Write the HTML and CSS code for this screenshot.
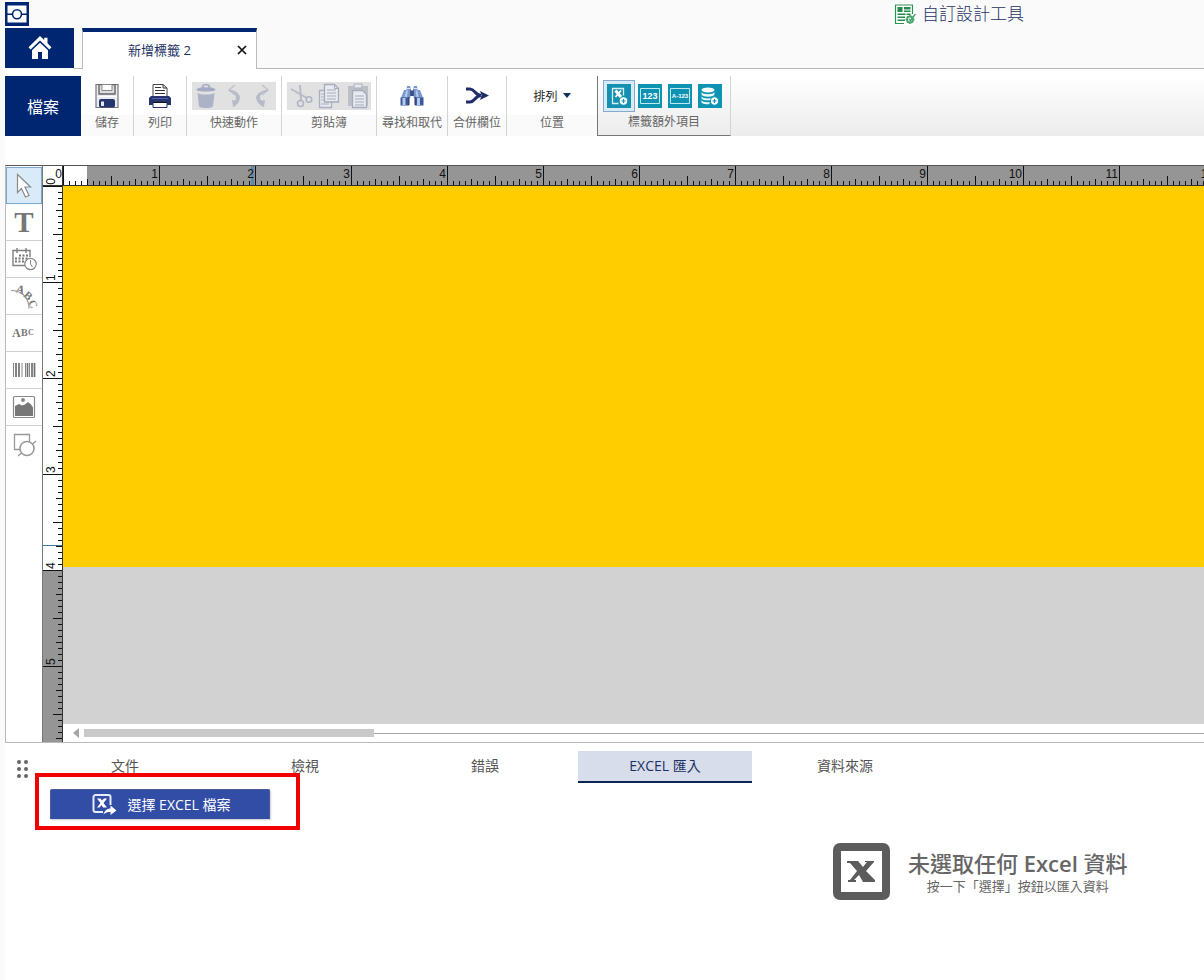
FILE: index.html
```html
<!DOCTYPE html>
<html lang="zh-Hant">
<head>
<meta charset="utf-8">
<title>新增標籤 2</title>
<link rel="stylesheet" href="styles.css">
</head>
<body>
<div class="app">
  <header class="header">
    <div class="titlebar">
      <svg class="logo" viewBox="0 0 24 24" width="24" height="24" aria-hidden="true">
        <rect width="24" height="24" fill="#002672"/>
        <path d="M2.500 3.500h19v17h-19z" fill="#fff"/>
        <path d="M2 12.300h5.500M16.500 12.300H22" stroke="#002672" stroke-width="1.500"/>
        <path d="M6 9.500c1.500-1 1.500-2.500 4-3.500h4c2.500 1 2.500 2.500 4 3.500M6 15c1.500 1 2 2.500 4 3.500h4c2-1 2.500-2.500 4-3.500" fill="none" stroke="#fff" stroke-width="1.500"/>
        <circle cx="12" cy="12.300" r="4.500" fill="#fff" stroke="#002672" stroke-width="1.600"/>
      </svg>
      <a class="custom-tool" href="#">
        <svg viewBox="0 0 22 22" width="22" height="22" aria-hidden="true">
          <rect width="22" height="22" fill="#fff"/>
          <path d="M10 20.500H1.500V2h17v9" fill="none" stroke="#2f8f55" stroke-width="1.200"/>
          <path d="M3.500 4h5v5h-5zM10 4h6.500v2.500H10zM10 7.500h6.500V9H10zM3.500 10.500h8V12h-8zM12.500 10.500h4V12h-4zM3.500 13.500h7.500V15H3.500zM3.500 16.500h7.500V18H3.500z" fill="#238b4b"/>
          <circle cx="16" cy="16.500" r="3" fill="none" stroke="#4aa56c" stroke-width="1.800"/>
          <path d="M16 12v2M16 19v2M11.500 16.500h2M18.500 16.500h2M13 13.500l1 1M18 18.500l1 1M13 19.500l1-1M15 16l1.500 1.500L21.500 11" fill="none" stroke="#4aa56c" stroke-width="1.500"/>
        </svg>
        <span>自訂設計工具</span>
      </a>
    </div>
    <nav class="doc-tabs">
      <button class="home" type="button" aria-label="首頁">
        <svg viewBox="0 0 24 24" width="24" height="24" aria-hidden="true">
          <path d="M12 0 0.500 11.200 2.600 13.400 12 4.600l9.400 8.800 2.100-2.200-4-3.900V1.800h-3.300v2.300z" fill="#fff"/>
          <path d="M12 6.800 4 14.200V23h6v-7h4v7h6v-8.800z" fill="#fff"/>
        </svg>
      </button>
      <span class="tab-gap"></span>
      <div class="doc-tab">
        <span>新增標籤 2</span>
        <button class="close" type="button" aria-label="關閉">
          <svg viewBox="0 0 10 10" width="10" height="10" aria-hidden="true"><path d="M1 1l8 8M9 1 1 9" stroke="#111" stroke-width="1.700"/></svg>
        </button>
      </div>
      <span class="tab-rest"></span>
    </nav>
  </header>

  <main class="body">
    <section class="ribbon" aria-label="功能區">
      <button class="file" type="button">檔案</button>

      <button class="group g-small" type="button">
        <span class="tools">
          <svg viewBox="0 0 24 24" width="24" height="24" aria-hidden="true">
            <path d="M1 .5h22v23H1z" fill="#e9edf3" stroke="#777" stroke-width="1.200"/>
            <path d="M4 .5V10h16V.5z" fill="#ddd" stroke="#666" stroke-width="1.400"/>
            <path d="M7 .5v6h10v-6z" fill="#fff" stroke="#888"/>
            <path d="M2 12.500h20" stroke="#fff"/>
            <rect x="4" y="15" width="16" height="8.500" rx="2" fill="#26356f"/>
            <path d="M6 17.500h3V22H6z" fill="#e5eaf6"/>
          </svg>
        </span>
        <span class="caption">儲存</span>
      </button>

      <button class="group g-small" type="button">
        <span class="tools">
          <svg viewBox="0 0 24 24" width="24" height="24" aria-hidden="true">
            <path d="M5 13V.500h10l4 3.500v9z" fill="#fff" stroke="#444"/>
            <path d="M15 .5V4h4M7 3.500h6M7 6.500h10M7 9.500h10" fill="none" stroke="#333"/>
            <path d="M3 12h18l2 2v7H1v-7z" fill="#26356f"/>
            <path d="M4 14.500h16" stroke="#53629c"/>
            <path d="M5 18h14v5.500H5z" fill="#fff" stroke="#26356f"/>
            <path d="M5 18h14v1H5z" fill="#111"/>
          </svg>
        </span>
        <span class="caption">列印</span>
      </button>

      <div class="group g-wide">
        <span class="tools disabled">
          <button type="button" disabled aria-label="刪除"><svg viewBox="0 0 28 28" width="28" height="28" aria-hidden="true">
            <path d="M4.500 8c0-4 19-4 19 0-2 2-17 2-19 0z" fill="#a3abc2"/><ellipse cx="14" cy="4.500" rx="3.500" ry="1.800" fill="#e1e1e1" stroke="#a3abc2" stroke-width="1.500"/>
            <path d="M5.500 11c4 2 13 2 17 0l-1.500 13.500c-3 2-11 2-14 0z" fill="#adb3c7"/></svg></button>
          <button type="button" disabled aria-label="復原"><svg viewBox="0 0 28 28" width="28" height="28" aria-hidden="true">
            <path d="M15 3 9 8l6 5" fill="none" stroke="#bfc3ce" stroke-width="1.600"/><path d="M9 8h3c6 2 8 5 8 8-1 5-4 8-7 9l-1-7c3 1 4 0 4-2 0-4-3-6-7-7z" fill="#b6bbc9"/></svg></button>
          <button type="button" disabled aria-label="取消復原"><svg viewBox="0 0 28 28" width="28" height="28" aria-hidden="true">
            <path d="m14 3 6 5-6 5" fill="none" stroke="#bfc3ce" stroke-width="1.600"/><path d="M20 8h-3c-6 2-9 5-9 8 1 5 5 8 8 9l1-7c-3 1-5 0-5-2 0-4 4-6 8-7z" fill="#b6bbc9"/></svg></button>
        </span>
        <span class="caption">快速動作</span>
      </div>

      <div class="group g-wide">
        <span class="tools disabled">
          <button type="button" disabled aria-label="剪下"><svg viewBox="0 0 28 28" width="28" height="28" aria-hidden="true">
            <path d="M4 7l16 9M13 3l1 15" stroke="#b7bbc7" stroke-width="2"/><circle cx="13.500" cy="21.500" r="3" fill="none" stroke="#b0b5c3" stroke-width="1.600"/><circle cx="22" cy="17.500" r="2.800" fill="none" stroke="#b0b5c3" stroke-width="1.600"/></svg></button>
          <button type="button" disabled aria-label="複製"><svg viewBox="0 0 28 28" width="28" height="28" aria-hidden="true">
            <path d="M4.500 8.500h12v17h-12z" fill="#e6e8ec" stroke="#aab0c0" stroke-width="1.300"/><path d="M6 12h8M6 15h8M6 18h8M6 22h8" stroke="#aab0c0"/>
            <path d="M9.500 2.500h10l4 4v13.500h-14z" fill="#e8eaee" stroke="#a4abbd" stroke-width="1.300"/><path d="M19.500 2.500v4h4M12 8h9M12 11h9M12 14h9M12 17h9" fill="none" stroke="#a4abbd"/></svg></button>
          <button type="button" disabled aria-label="貼上"><svg viewBox="0 0 28 28" width="28" height="28" aria-hidden="true">
            <path d="M5 4h20v20H5z" fill="#bcbfc6"/><path d="M11 2h8v4h-8z" fill="#e6e7ea" stroke="#aab0c0"/>
            <path d="M9.500 8.500h10l4 4v13h-14z" fill="#e8eaee" stroke="#a4abbd" stroke-width="1.300"/><path d="M12 14h9M12 17h9M12 20h9M12 23h9" stroke="#a4abbd"/></svg></button>
        </span>
        <span class="caption">剪貼簿</span>
      </div>

      <button class="group g-find" type="button">
        <span class="tools">
          <svg viewBox="0 0 24 24" width="24" height="24" aria-hidden="true">
            <path d="M7 2h3l1 3v6l-1 3H1l3-8h2.500z" fill="#7896cc"/><path d="M14 2h3l.5 4H20l3 8h-9l-1-3V5z" fill="#7896cc"/>
            <path d="M10.500 7h3v5h-3z" fill="#4d6aa6"/>
            <path d="M0.500 13.500H9v8H.5zM15 13.500h8.500v8H15z" fill="#3c5896"/>
            <path d="M2.500 14h3v7h-3zM17 14h3v7h-3zM6 6.500h2L7 13H4.500zM15.500 6.500h2l1 6.500h-2z" fill="#b4c8ee"/>
            <path d="M9 13v8M15 13v8M11 6v6M13 6v6" stroke="#26355f"/>
            <path d="M7 4.500h3.500M13.500 4.500H17" stroke="#dce6f8"/>
          </svg>
        </span>
        <span class="caption">尋找和取代</span>
      </button>

      <button class="group g-merge" type="button">
        <span class="tools">
          <svg viewBox="0 0 26 20" width="26" height="20" aria-hidden="true">
            <path d="M2 3h4c5 0 5 6.500 11 6.500M2 16h4c5 0 5-6.500 11-6.500" fill="none" stroke="#1f2d69" stroke-width="3"/>
            <path d="M16 5l9 4.500L16 14l1.500-4.500z" fill="#1f2d69"/>
          </svg>
        </span>
        <span class="caption">合併欄位</span>
      </button>

      <button class="group g-pos" type="button">
        <span class="tools arrange">排列
          <svg viewBox="0 0 8 5" width="8" height="5" aria-hidden="true"><path d="M0 0h8L4 5z" fill="#0e2a5e"/></svg>
        </span>
        <span class="caption">位置</span>
      </button>

      <div class="group g-extra">
        <span class="tools extras">
          <button class="active" type="button" aria-label="Excel"><svg viewBox="0 0 24 24" width="24" height="24" aria-hidden="true">
            <rect width="24" height="24" fill="#1690b0"/><path d="M11.500 19.500h-6v-15h11v7" fill="none" stroke="#d8f2f8" stroke-width="1.300"/>
            <path d="M8.500 6.500l5.500 6.500" stroke="#fff" stroke-width="3"/><path d="M14 6.500 8.500 13" stroke="#fff" stroke-width="1.800"/><circle cx="16.500" cy="17" r="3.800" fill="#fff"/><path d="M16.500 15v4M14.500 17h4" stroke="#1690b0" stroke-width="1.200"/></svg></button>
          <button type="button" aria-label="計數器"><svg viewBox="0 0 24 24" width="24" height="24" aria-hidden="true">
            <rect width="24" height="24" fill="#0f93b3"/><path d="M2.500 4.500h19v15h-19z" fill="none" stroke="#bfeaf3"/><text x="12" y="15" class="icon-num">123</text></svg></button>
          <button type="button" aria-label="序列"><svg viewBox="0 0 24 24" width="24" height="24" aria-hidden="true">
            <rect width="24" height="24" fill="#0f93b3"/><path d="M2.500 4.500h19v15h-19z" fill="none" stroke="#bfeaf3"/><text x="12" y="14" class="icon-seq">A-123</text></svg></button>
          <button type="button" aria-label="資料庫"><svg viewBox="0 0 24 24" width="24" height="24" aria-hidden="true">
            <rect width="24" height="24" fill="#0f93b3"/><ellipse cx="10" cy="6" rx="6.500" ry="2.500" fill="#fff"/>
            <path d="M3.500 8c1 3 12 3 13 0v2.500c-1 3-12 3-13 0zM3.500 12.200c1 3 12 3 13 0V14c-2 3-12 3-13 .5zM3.500 16c1 2 4 2.500 8 2V20c-4 .5-7 0-8-1.500z" fill="#e8f8fb"/>
            <circle cx="16.500" cy="17" r="4.200" fill="#fff" stroke="#0f93b3"/><path d="M16.500 15v4M14.500 17h4" stroke="#0f93b3" stroke-width="1.200"/></svg></button>
        </span>
        <span class="caption">標籤額外項目</span>
      </div>
      <div class="ribbon-rest"></div>
    </section>

    <section class="workspace">
      <div class="toolbox" role="toolbar" aria-label="工具">
        <button class="tool selected" type="button" aria-label="選取"><svg viewBox="0 0 28 28" width="28" height="28" aria-hidden="true">
          <path d="M7.500 2.500v18l4-4 4 8.500 3.500-1.500-4-8.500h5.500z" fill="#fff" stroke="#8a8a8a" stroke-width="1.200"/></svg></button>
        <button class="tool letter" type="button">T</button>
        <button class="tool" type="button" aria-label="日期時間"><svg viewBox="0 0 28 28" width="28" height="28" aria-hidden="true">
          <path d="M15 20.500H3V5.500h17V12M7 3v5M16 3v5" fill="none" stroke="#808080" stroke-width="1.400"/>
          <path d="M9 10.500h10M5 13.500h14M5 16.500h10" stroke="#777" stroke-width="1.800" stroke-dasharray="2 1.500"/>
          <circle cx="20.500" cy="19" r="5.700" fill="#fff" stroke="#888" stroke-width="1.200"/><path d="M20.500 15v4l2 3" fill="none" stroke="#888"/></svg></button>
        <button class="tool" type="button" aria-label="弧形文字"><svg viewBox="0 0 28 28" width="28" height="28" aria-hidden="true">
          <g class="icon-serif"><text font-size="12" transform="translate(5 10) rotate(18)">A</text><text font-size="11" transform="translate(13 14) rotate(42)">B</text><text font-size="11" transform="translate(18 20) rotate(65)">C</text></g>
          <path d="M1 8.500c10 0 18 6 18 18" fill="none" stroke="#999" stroke-width="1.200"/></svg></button>
        <button class="tool" type="button" aria-label="文字藝術師"><svg viewBox="0 0 28 28" width="28" height="28" aria-hidden="true">
          <g class="icon-serif"><text x="2" y="18" font-size="12">A</text><text x="11" y="17" font-size="10">B</text><text x="18" y="16" font-size="8">C</text></g></svg></button>
        <button class="tool" type="button" aria-label="條碼"><svg viewBox="0 0 28 28" width="28" height="28" aria-hidden="true">
          <path d="M3.500 7v14M15.500 7v14M19.500 7v14M12 7v14" stroke="#888"/><path d="M6 7v14M9 7v14M17.500 7v14M22 7v14M24.500 7v14" stroke="#707070" stroke-width="1.700"/></svg></button>
        <button class="tool" type="button" aria-label="圖片"><svg viewBox="0 0 28 28" width="28" height="28" aria-hidden="true">
          <rect x="3.500" y="3.500" width="21" height="21" rx="1" fill="#fff" stroke="#888" stroke-width="1.200"/><circle cx="13" cy="7" r="2" fill="#888"/>
          <path d="M5 23V13l4-2 3 1.500 3-1 3-2.500 3 2.500 2 3V23z" fill="#777"/></svg></button>
        <button class="tool" type="button" aria-label="圖形"><svg viewBox="0 0 28 28" width="28" height="28" aria-hidden="true">
          <path d="M4.500 3.500h15v15h-15z" fill="#fff" stroke="#999" stroke-width="1.300"/><path d="M8 25l18-15" stroke="#999" stroke-width="1.400"/><circle cx="17" cy="17.500" r="7" fill="#fff" stroke="#999" stroke-width="1.600"/></svg></button>
      </div>

      <div class="corner"><span class="v-zero">0</span><span class="h-zero">0</span></div>

      <div class="ruler-h">
        <svg class="ticks" width="100%" height="20" aria-hidden="true">
          <defs><pattern id="inch-h" width="96" height="20" patternUnits="userSpaceOnUse">
            <path d="M.5 0v20M48.500 10v10M24.500 13v7M72.500 13v7M6.500 15v5M12.500 15v5M18.500 15v5M30.500 15v5M36.500 15v5M42.500 15v5M54.500 15v5M60.500 15v5M66.500 15v5M78.500 15v5M84.500 15v5M90.500 15v5" stroke="#111"/>
          </pattern></defs>
          <rect width="24" height="20" fill="#fff"/>
          <rect x="188" width="3" height="20" fill="#5f87a8"/>
          <rect width="100%" height="20" fill="url(#inch-h)"/>
          <rect y="19" width="100%" height="1" fill="#333"/>
        </svg>
        <ol class="marks"><li>1</li><li>2</li><li>3</li><li>4</li><li>5</li><li>6</li><li>7</li><li>8</li><li>9</li><li>10</li><li>11</li><li>12</li></ol>
      </div>

      <div class="ruler-v">
        <svg class="ticks" width="20" height="100%" aria-hidden="true">
          <defs><pattern id="inch-v" width="20" height="96" patternUnits="userSpaceOnUse">
            <path d="M0 .5h20M10 48.500h10M13 24.500h7M13 72.500h7M15 6.500h5M15 12.500h5M15 18.500h5M15 30.500h5M15 36.500h5M15 42.500h5M15 54.500h5M15 60.500h5M15 66.500h5M15 78.500h5M15 84.500h5M15 90.500h5" stroke="#111"/>
          </pattern></defs>
          <rect width="20" height="384" fill="#fff"/>
          <rect width="20" height="100%" fill="url(#inch-v)"/>
          <rect y="359" width="20" height="1" fill="#3d7896"/>
          <rect x="19" width="1" height="100%" fill="#333"/>
        </svg>
        <ol class="marks"><li>1</li><li>2</li><li>3</li><li>4</li><li>5</li></ol>
      </div>

      <div class="stage">
        <div class="label-canvas"></div>
        <div class="scrollbar">
          <svg viewBox="0 0 6 10" width="6" height="10" aria-hidden="true"><path d="M6 0v10L0 5z" fill="#a6a6a6"/></svg>
          <span class="thumb"></span><span class="track"></span>
        </div>
      </div>
    </section>

    <section class="panel">
      <nav class="panel-tabs">
        <svg class="grip" viewBox="0 0 12 18" width="12" height="18" aria-hidden="true"><g fill="#666"><circle cx="2" cy="2" r="2"/><circle cx="9" cy="2" r="2"/><circle cx="2" cy="9" r="2"/><circle cx="9" cy="9" r="2"/><circle cx="2" cy="16" r="2"/><circle cx="9" cy="16" r="2"/></g></svg>
        <button type="button">文件</button>
        <button type="button">檢視</button>
        <button type="button">錯誤</button>
        <button class="current" type="button">EXCEL 匯入</button>
        <button type="button">資料來源</button>
      </nav>
      <div class="import">
        <button class="choose" type="button">
          <svg viewBox="0 0 26 24" width="26" height="24" aria-hidden="true">
            <path d="M12 20H4.500a2 2 0 0 1-2-2V5a2 2 0 0 1 2-2h13a2 2 0 0 1 2 2v8" fill="none" stroke="#e6ecff" stroke-width="2"/>
            <path d="M6 6.500h3.500l1.500 2 2-2h3L12.500 11l3.500 4.500h-4L10.500 13l-2 2.500H6L9.500 11z" fill="#fff"/>
            <path d="M12.500 22.500c1-4 4-6 7-6v-3l6 5-6 4.500v-3c-3 0-5 .5-7 2.500z" fill="#fff"/>
          </svg>
          選擇 EXCEL 檔案
        </button>
        <span class="highlight"></span>
      </div>
      <div class="empty">
        <svg viewBox="0 0 57 57" width="57" height="57" aria-hidden="true">
          <rect width="57" height="57" rx="7" fill="#5c5c5c"/><rect x="8" y="8" width="41" height="41" fill="#fff"/>
          <path d="M14 18h11l5 6 4-5h-2v-1h9v1l-8 9 9 9v2H30l-4-7-5 5h2v2h-8v-2h2l7-9-7-8h-3z" fill="#5c5c5c"/>
        </svg>
        <div class="empty-text"><h2>未選取任何 <span class="latin">Excel</span> 資料</h2><p>按一下「選擇」按鈕以匯入資料</p></div>
      </div>
    </section>
  </main>
</div>
</body>
</html>
```
FILE: styles.css
```css
* { box-sizing: border-box; }
body {
  margin: 0;
  background: #fafafa;
  color: #555;
  font-family: "Open Sans", "Noto Sans CJK TC", sans-serif;
  font-size: 12px;
}
button {
  margin: 0;
  padding: 0;
  border: 0;
  background: none;
  color: inherit;
  font: inherit;
}
svg { display: block; flex: none; }
.app {
  display: flex;
  flex-direction: column;
  min-height: 100vh;
  padding-left: 5px;
  overflow: hidden;
}

/* title and document tabs */
.titlebar { display: flex; height: 28px; padding-top: 2px; }
.custom-tool {
  display: flex;
  align-items: center;
  gap: 6px;
  height: 24px;
  margin-left: 865px;
  color: #1c3264;
  font-size: 17px;
  font-weight: 300;
  line-height: 24px;
  text-decoration: none;
  white-space: nowrap;
}
.doc-tabs { display: flex; height: 41px; }
.home {
  display: grid;
  place-items: center;
  width: 69px;
  height: 40px;
  background: #002672;
}
.tab-gap { width: 8px; border-bottom: 1px solid #bbb; }
.tab-rest { flex: 1; border-bottom: 1px solid #bbb; }
.doc-tab {
  display: flex;
  align-items: center;
  justify-content: space-between;
  width: 175px;
  padding: 0 9px 2px 45px;
  border: 1px solid #bbb;
  border-top: 4px solid #002672;
  border-bottom: 0;
  background: #fff;
  color: #1c3264;
  font-size: 13px;
}
.body {
  display: flex;
  flex: 1;
  flex-direction: column;
  background: #fff;
}

/* ribbon */
.ribbon { display: flex; height: 60px; margin: 7px 0 29px; }
.file { width: 76px; background: #002672; color: #fff; font-size: 16px; }
.group {
  display: flex;
  flex-direction: column;
  border-right: 1px solid #d4d4d4;
  background: linear-gradient(#fff 39px, #fafafa 39px);
}
.tools { display: flex; align-items: center; justify-content: center; height: 39px; }
.caption {
  height: 21px;
  color: #666;
  line-height: 16px;
  text-align: center;
  white-space: nowrap;
}
.g-small { width: 53px; }
.g-wide { width: 95px; }
.g-find { width: 71px; }
.g-merge { width: 59px; }
.g-pos { width: 90px; border-right: 0; }
.disabled { height: 28px; margin: 6px 5px 5px; background: #e1e1e1; }
.arrange { gap: 5px; color: #222; }
.g-extra {
  width: 134px;
  border-left: 1px solid #777;
  border-bottom: 1px solid #777;
  background: linear-gradient(#fff, #ececec);
}
.extras { gap: 6px; padding-right: 4px; }
.g-extra .caption { height: 20px; line-height: 14px; }
.extras .active {
  margin-right: -3px;
  padding: 3px;
  border: 1px solid #86a9cd;
  background: #d6ebf8;
}
.ribbon-rest { flex: 1; background: linear-gradient(#fff, #ececec); }
.icon-num, .icon-seq {
  fill: #fff;
  font-family: "Liberation Sans", sans-serif;
  font-size: 9px;
  font-weight: 700;
  text-anchor: middle;
}
.icon-seq { font-size: 6px; }

/* editor */
.workspace {
  display: grid;
  flex: 1;
  grid-template: 20px 1fr / 36px 21px 1fr;
  border-top: 1px solid #555;
  border-bottom: 1px solid #bbb;
  border-left: 1px solid #bbb;
}
.toolbox { display: flex; grid-row: 1 / 3; flex-direction: column; padding-top: 1px; }
.tool {
  display: grid;
  place-items: center;
  width: 36px;
  height: 37px;
  border-bottom: 1px solid #d0d0d0;
}
.tool:last-child { border-bottom: 0; }
.selected { border: 1px solid #7ba7d0; background: #d9eaf8; }
.letter {
  color: #777;
  font-family: "Liberation Serif", serif;
  font-size: 29px;
  font-weight: 700;
  line-height: 32px;
}
.icon-serif { fill: #777; font-family: "Liberation Serif", serif; font-weight: 700; }
.corner, .ruler-h, .ruler-v {
  color: #111;
  font-family: "Liberation Sans", sans-serif;
  font-size: 12px;
  line-height: 16px;
}
.corner {
  display: grid;
  border-right: 1px solid #333;
  border-bottom: 1px solid #333;
  border-left: 1px solid #777;
}
.corner span { grid-area: 1 / 1; }
.v-zero { place-self: end start; writing-mode: vertical-rl; transform: rotate(180deg); }
.h-zero { place-self: start end; }
.marks { display: flex; margin: 0; padding: 0; list-style: none; }
.ruler-h { display: grid; min-width: 0; overflow: hidden; background: #959595; }
.ruler-h > *, .ruler-v > * { grid-area: 1 / 1; }
.ruler-h li { flex: 0 0 96px; padding-right: 1px; text-align: right; }
.ruler-v {
  display: grid;
  min-height: 0;
  overflow: hidden;
  border-left: 1px solid #777;
  background: #959595;
}
.ruler-v .marks { flex-direction: column; }
.ruler-v li {
  flex: 0 0 96px;
  width: 16px;
  padding-top: 1px;
  writing-mode: vertical-rl;
  transform: rotate(180deg);
}
.stage { display: flex; flex-direction: column; justify-content: space-between; background: #d2d2d2; }
.label-canvas { height: 381px; background: #ffcd00; }
.scrollbar { display: flex; align-items: center; height: 18px; padding-left: 10px; background: #fff; }
.thumb { width: 290px; height: 8px; margin-left: 5px; background: #c9c9c9; }
.track { flex: 1; height: 1px; background: #a6a6a6; }

/* lower panel */
.panel { min-height: 237px; padding-top: 8px; }
.panel-tabs { display: flex; gap: 6px; height: 32px; font-size: 14px; }
.grip { margin: 9px 3px 0 12px; }
.panel-tabs button { width: 174px; padding-bottom: 4px; }
.panel-tabs .current {
  padding-bottom: 2px;
  border-bottom: 2px solid #0b2554;
  background: #d7ddeb;
  color: #1c3264;
}
.import { position: relative; width: 220px; margin: 6px 0 0 45px; }
.choose {
  display: flex;
  align-items: center;
  justify-content: center;
  gap: 10px;
  width: 100%;
  height: 30px;
  padding: 0 0 1px 2px;
  border: 1px solid #4a5b9c;
  border-bottom: 0;
  border-radius: 2px 2px 0 0;
  background: #324da5;
  box-shadow: 1px 1px 2px #ccc;
  color: #fff;
  font-size: 14px;
}
.highlight {
  position: absolute;
  inset: -16px -30px -11px -15px;
  border: 4px solid #f00000;
  pointer-events: none;
}
.empty { display: flex; gap: 18px; margin: 24px 0 0 828px; }
.empty-text { padding-top: 6px; text-align: center; white-space: nowrap; }
.empty h2 { margin: 0; color: #666; font-size: 22px; font-weight: 500; line-height: 28px; }
.latin { font-weight: 600; }
.empty p { margin: 0; color: #666; font-size: 13px; line-height: 18px; }
```
